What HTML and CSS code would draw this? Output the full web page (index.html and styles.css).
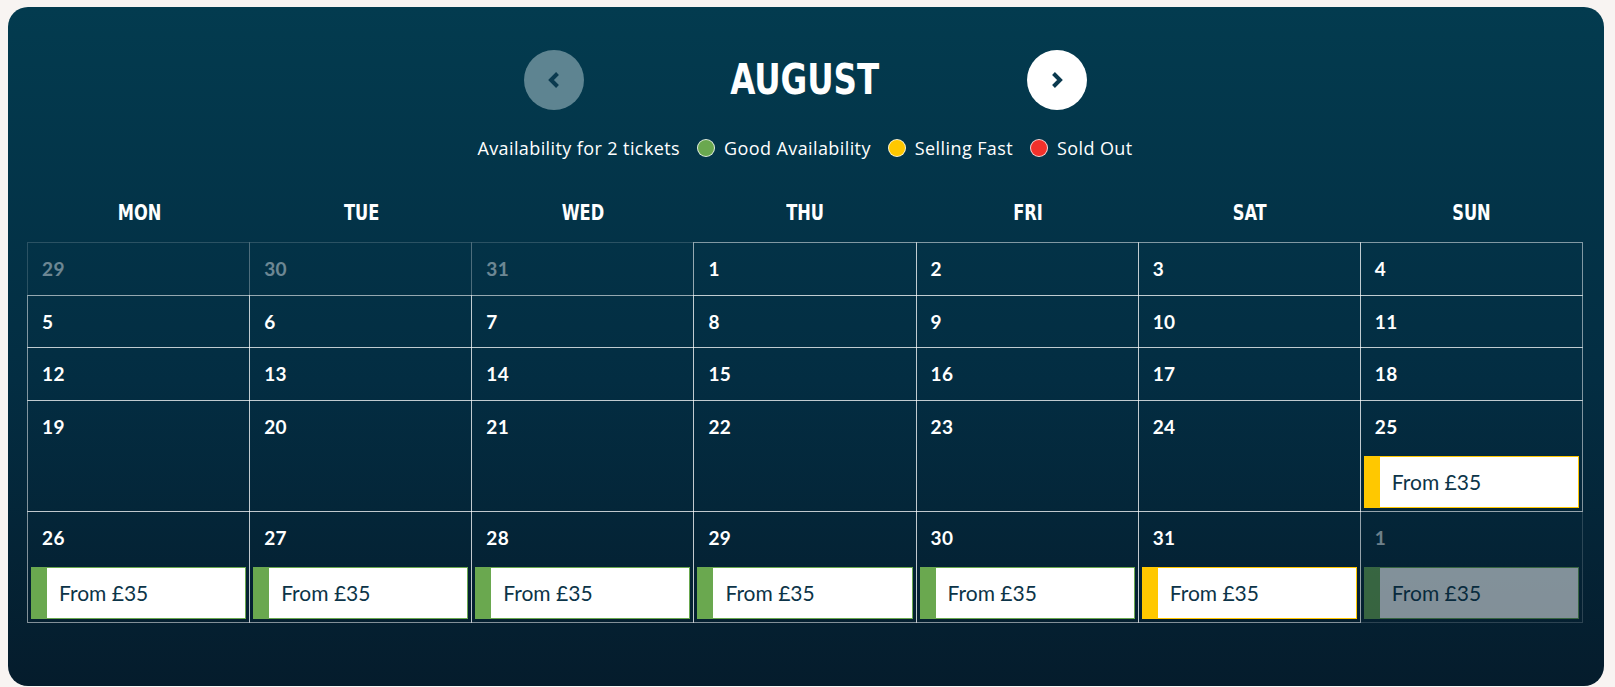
FILE: index.html
```html
<!DOCTYPE html>
<html lang="en">
<head>
  <meta charset="UTF-8">
  <meta name="viewport" content="width=device-width, initial-scale=1.0">
  <title>August availability</title>
  <link rel="stylesheet" href="styles.css">
</head>
<body>
  <div class="calendar">
    <div class="nav">
      <button class="nav-btn prev" aria-label="Previous month">
        <svg width="16" height="18" viewBox="0 0 16 18"><path d="M11.5 2.5 L5 9 L11.5 15.5" fill="none" stroke="#0b3a4f" stroke-width="4"/></svg>
      </button>
      <div class="month"><span>AUGUST</span></div>
      <button class="nav-btn next" aria-label="Next month">
        <svg width="16" height="18" viewBox="0 0 16 18"><path d="M4.5 2.5 L11 9 L4.5 15.5" fill="none" stroke="#0b3a4f" stroke-width="4"/></svg>
      </button>
    </div>

    <div class="legend">
      <span>Availability for 2 tickets</span>
      <span class="legend-item"><span class="dot good"></span>Good Availability</span>
      <span class="legend-item"><span class="dot fast"></span>Selling Fast</span>
      <span class="legend-item"><span class="dot sold"></span>Sold Out</span>
    </div>

    <div class="weekdays">
      <div class="weekday"><span>MON</span></div>
      <div class="weekday"><span>TUE</span></div>
      <div class="weekday"><span>WED</span></div>
      <div class="weekday"><span>THU</span></div>
      <div class="weekday"><span>FRI</span></div>
      <div class="weekday"><span>SAT</span></div>
      <div class="weekday"><span>SUN</span></div>
    </div>

    <div class="days">
      <!-- week 1 -->
      <div class="day muted"><div class="num">29</div></div>
      <div class="day muted"><div class="num">30</div></div>
      <div class="day muted"><div class="num">31</div></div>
      <div class="day"><div class="num">1</div></div>
      <div class="day"><div class="num">2</div></div>
      <div class="day"><div class="num">3</div></div>
      <div class="day"><div class="num">4</div></div>
      <!-- week 2 -->
      <div class="day"><div class="num">5</div></div>
      <div class="day"><div class="num">6</div></div>
      <div class="day"><div class="num">7</div></div>
      <div class="day"><div class="num">8</div></div>
      <div class="day"><div class="num">9</div></div>
      <div class="day"><div class="num">10</div></div>
      <div class="day"><div class="num">11</div></div>
      <!-- week 3 -->
      <div class="day"><div class="num">12</div></div>
      <div class="day"><div class="num">13</div></div>
      <div class="day"><div class="num">14</div></div>
      <div class="day"><div class="num">15</div></div>
      <div class="day"><div class="num">16</div></div>
      <div class="day"><div class="num">17</div></div>
      <div class="day"><div class="num">18</div></div>
      <!-- week 4 -->
      <div class="day"><div class="num">19</div></div>
      <div class="day"><div class="num">20</div></div>
      <div class="day"><div class="num">21</div></div>
      <div class="day"><div class="num">22</div></div>
      <div class="day"><div class="num">23</div></div>
      <div class="day"><div class="num">24</div></div>
      <div class="day"><div class="num">25</div><div class="price fast">From £35</div></div>
      <!-- week 5 -->
      <div class="day"><div class="num">26</div><div class="price">From £35</div></div>
      <div class="day"><div class="num">27</div><div class="price">From £35</div></div>
      <div class="day"><div class="num">28</div><div class="price">From £35</div></div>
      <div class="day"><div class="num">29</div><div class="price">From £35</div></div>
      <div class="day"><div class="num">30</div><div class="price">From £35</div></div>
      <div class="day"><div class="num">31</div><div class="price fast">From £35</div></div>
      <div class="day muted"><div class="num">1</div><div class="price">From £35</div></div>
    </div>
  </div>
</body>
</html>
```

FILE: styles.css
```css
* {
  box-sizing: border-box;
}
body {
  margin: 0;
  padding: 7px 11px 0 8px;
  background: #f8f4f2;
  font-family: Lato, "Noto Sans", sans-serif;
}
.calendar {
  background: linear-gradient(to bottom, #033b4f, #032d42 55%, #051c2c);
  border-radius: 20px;
  padding: 43px 21px 63px 19px;
  color: #fff;
}

/* month switcher */
.nav {
  display: flex;
  justify-content: center;
  align-items: center;
}
.nav-btn {
  width: 60px;
  height: 60px;
  border-radius: 50%;
  border: none;
  padding: 0;
  display: flex;
  align-items: center;
  justify-content: center;
  cursor: pointer;
}
.nav-btn.prev {
  background: #5e8491;
}
.nav-btn.next {
  background: #fff;
}
.month {
  width: 443px;
  text-align: center;
  font-family: "DejaVu Sans Condensed", "DejaVu Sans", sans-serif;
  font-weight: bold;
  font-size: 42px;
  line-height: 60px;
}
.month span {
  display: inline-block;
  transform: scaleX(0.86);
}

/* legend */
.legend {
  display: flex;
  justify-content: center;
  align-items: center;
  gap: 17px;
  margin-top: 26px;
  font-family: "Open Sans", Lato, sans-serif;
  font-size: 18px;
  letter-spacing: 0.4px;
  line-height: 24px;
}
.legend-item {
  display: flex;
  align-items: center;
  gap: 9px;
}
.dot {
  width: 18px;
  height: 18px;
  border-radius: 50%;
  border: 1px solid rgba(255, 255, 255, 0.8);
}
.dot.good {
  background: #6aa84f;
}
.dot.fast {
  background: #ffc800;
}
.dot.sold {
  background: #f2312b;
}

/* week header */
.weekdays {
  display: grid;
  grid-template-columns: repeat(7, 1fr);
  padding-left: 1px;
  margin-top: 38px;
  margin-bottom: 14px;
}
.weekday {
  text-align: center;
  font-family: "DejaVu Sans Condensed", "DejaVu Sans", sans-serif;
  font-weight: bold;
  font-size: 22px;
  line-height: 30px;
}
.weekday span {
  display: inline-block;
  transform: scaleX(0.82);
}

/* day grid */
.days {
  display: grid;
  grid-template-columns: repeat(7, 1fr);
  padding: 1px 0 0 1px;
}
.day {
  position: relative;
  z-index: 1;
  margin: -1px 0 0 -1px;
  min-height: 53.5px;
  border: 1px solid rgba(255, 255, 255, 0.5);
  padding: 13px 3px 3px;
}
.day.muted {
  z-index: 0;
  border-color: rgba(255, 255, 255, 0.16);
}
.num {
  font-weight: 700;
  font-size: 19px;
  line-height: 26px;
  padding: 0 11px;
  letter-spacing: 0.4px;
}
.day.muted .num {
  opacity: 0.42;
}
.price {
  margin-top: 16px;
  height: 52px;
  background: #fff;
  border: 1px solid #6aa84f;
  border-left-width: 16px;
  color: #0c3448;
  font-size: 21px;
  line-height: 50px;
  padding-left: 12px;
}
.price.fast {
  border-color: #ffc800;
}
.day.muted .price {
  opacity: 0.5;
}
```
